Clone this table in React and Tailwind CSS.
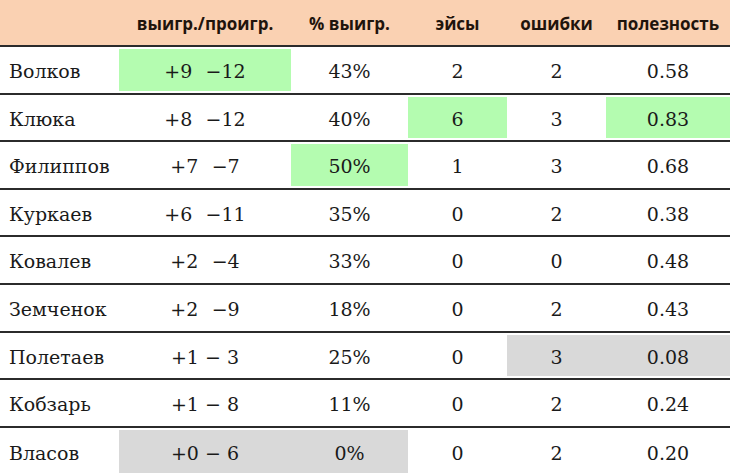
const cols = [
  { label: "", w: "w-[119px]" },
  { label: "выигр./проигр.", w: "w-[172px]" },
  { label: "% выигр.", w: "w-[117px]" },
  { label: "эйсы", w: "w-[99px]" },
  { label: "ошибки", w: "w-[99px]" },
  { label: "полезность", w: "flex-1" },
];

// hl: index of column -> "g" green / "s" grey
const rows = [
  { name: "Волков", v: ["+9\u2002\u2009−12", "43%", "2", "2", "0.58"], hl: { 1: "g" } },
  { name: "Клюка", v: ["+8\u2002\u2009−12", "40%", "6", "3", "0.83"], hl: { 3: "g", 5: "g" } },
  { name: "Филиппов", v: ["+7\u2002\u2009−7", "50%", "1", "3", "0.68"], hl: { 2: "g" } },
  { name: "Куркаев", v: ["+6\u2002\u2009−11", "35%", "0", "2", "0.38"], hl: {} },
  { name: "Ковалев", v: ["+2\u2002\u2009−4", "33%", "0", "0", "0.48"], hl: {} },
  { name: "Земченок", v: ["+2\u2002\u2009−9", "18%", "0", "2", "0.43"], hl: {} },
  { name: "Полетаев", v: ["+1 − 3", "25%", "0", "3", "0.08"], hl: { 4: "s", 5: "s" } },
  { name: "Кобзарь", v: ["+1 − 8", "11%", "0", "2", "0.24"], hl: {} },
  { name: "Власов", v: ["+0 − 6", "0%", "0", "2", "0.20"], hl: { 1: "s", 2: "s" } },
];

const serif = { fontFamily: '"DejaVu Serif", "Liberation Serif", serif' };

export default function App() {
  return (
    <div className="w-[730px] h-[475px] overflow-hidden bg-white">
      {/* header */}
      <div
        className="flex h-[47px] bg-[#fad1b2] border-b-2 border-[#2b2b2b] text-[#1f140c] font-bold text-[17px] pt-[3px]"
        style={{ fontFamily: '"Open Sans", "Noto Sans", sans-serif' }}
      >
        {cols.map((c, i) => (
          <div key={i} className={`${c.w} flex items-center justify-center`}>
            {c.label}
          </div>
        ))}
      </div>

      {rows.map((r, ri) => (
        <div
          key={r.name}
          className={`flex h-[47.6px] text-[#1a1a1a] text-[19px] ${ri < rows.length - 1 ? "border-b-2 border-[#2b2b2b]" : ""}`}
          style={serif}
        >
          <div className="w-[119px] flex items-center pl-[9px] pt-[3px]">{r.name}</div>
          {r.v.map((val, vi) => {
            const ci = vi + 1;
            const h = r.hl[ci];
            const bg = h === "g" ? "bg-[#b4fcb0]" : h === "s" ? "bg-[#d9d9d9]" : "";
            return (
              <div key={vi} className={`${cols[ci].w} py-[2px]`}>
                <div className={`h-full flex items-center justify-center pt-[3px] ${bg}`}>{val}</div>
              </div>
            );
          })}
        </div>
      ))}
    </div>
  );
}
